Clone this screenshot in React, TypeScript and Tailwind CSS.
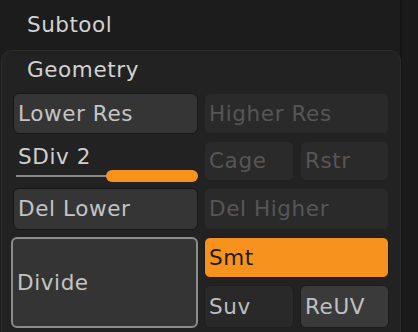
import React from 'react';

type Tone = 'normal' | 'disabled' | 'dim' | 'orange' | 'outlined' | 'light';

const toneClass: Record<Tone, string> = {
  normal: 'bg-[#353535] border-[#171717] text-[#c4c4c4]',
  disabled: 'bg-[#2a2a2a] border-[#222222] text-[#565656]',
  dim: 'bg-[#292929] border-[#1e1e1e] text-[#bdbdbd]',
  orange: 'bg-[#f7921f] border-[#1a1a1a] text-[#1c1c1c]',
  outlined: 'bg-[#343434] border-[#8c8c8c] border-2 text-[#c4c4c4]',
  light: 'bg-[#3a3a3a] border-[#1c1c1c] text-[#c0c0c0]',
};

const Btn: React.FC<{ label: string; tone?: Tone; className?: string }> = ({
  label,
  tone = 'normal',
  className = '',
}) => (
  <div
    className={`flex items-center rounded-[6px] border pl-[4px] text-[21.5px] leading-none tracking-[0.6px] ${toneClass[tone]} ${className}`}
  >
    {label}
  </div>
);

export default function App() {
  return (
    <div
      className="relative h-[332px] w-[418px] overflow-hidden bg-[#1c1c1c] text-[#c8c8c8]"
      style={{ fontFamily: '"DejaVu Sans", Verdana, sans-serif' }}
    >
      <div className="flex">
        <div className="w-[402px] border-r-2 border-[#141414]">
          <div className="h-[50px] pl-[27px] pt-[9px] text-[21.5px] tracking-[0.5px] text-[#d2d2d2]">Subtool</div>
          <div className="ml-[1px] h-[290px] w-[400px] rounded-t-[11px] border border-[#2c2c2c] bg-[#222222]">
            <div className="pl-[25px] pt-[6px] text-[21.5px] leading-[26px] tracking-[0.6px] text-[#d2d2d2]">Geometry</div>
            <div className="ml-[11px] mt-[10px] grid grid-cols-[185px_90px_89px] grid-rows-[41px_40px_42px_41px_43px] gap-x-[6px] gap-y-[7px]">
              <Btn label="Lower Res" />
              <Btn label="Higher Res" tone="disabled" className="col-span-2" />

              <div className="relative">
                <div className="pl-[5px] pt-[5px] text-[21.5px] leading-none tracking-[0.6px] text-[#cfcfcf]">SDiv 2</div>
                <div className="absolute left-[3px] top-[34px] h-[2px] w-[95px] bg-[#8a8a8a]" />
                <div className="absolute left-[93px] top-[29px] h-[12px] w-[92px] rounded-full bg-[#f7921f]" />
              </div>
              <Btn label="Cage" tone="disabled" />
              <Btn label="Rstr" tone="disabled" />

              <Btn label="Del Lower" />
              <Btn label="Del Higher" tone="disabled" className="col-span-2" />

              <Btn label="Divide" tone="outlined" className="row-span-2 -ml-[2px]" />
              <Btn label="Smt" tone="orange" className="col-span-2" />
              <Btn label="Suv" tone="dim" />
              <Btn label="ReUV" tone="light" />
            </div>
          </div>
        </div>
        <div className="flex-1 bg-[#1a1a1a]" />
      </div>
    </div>
  );
}
